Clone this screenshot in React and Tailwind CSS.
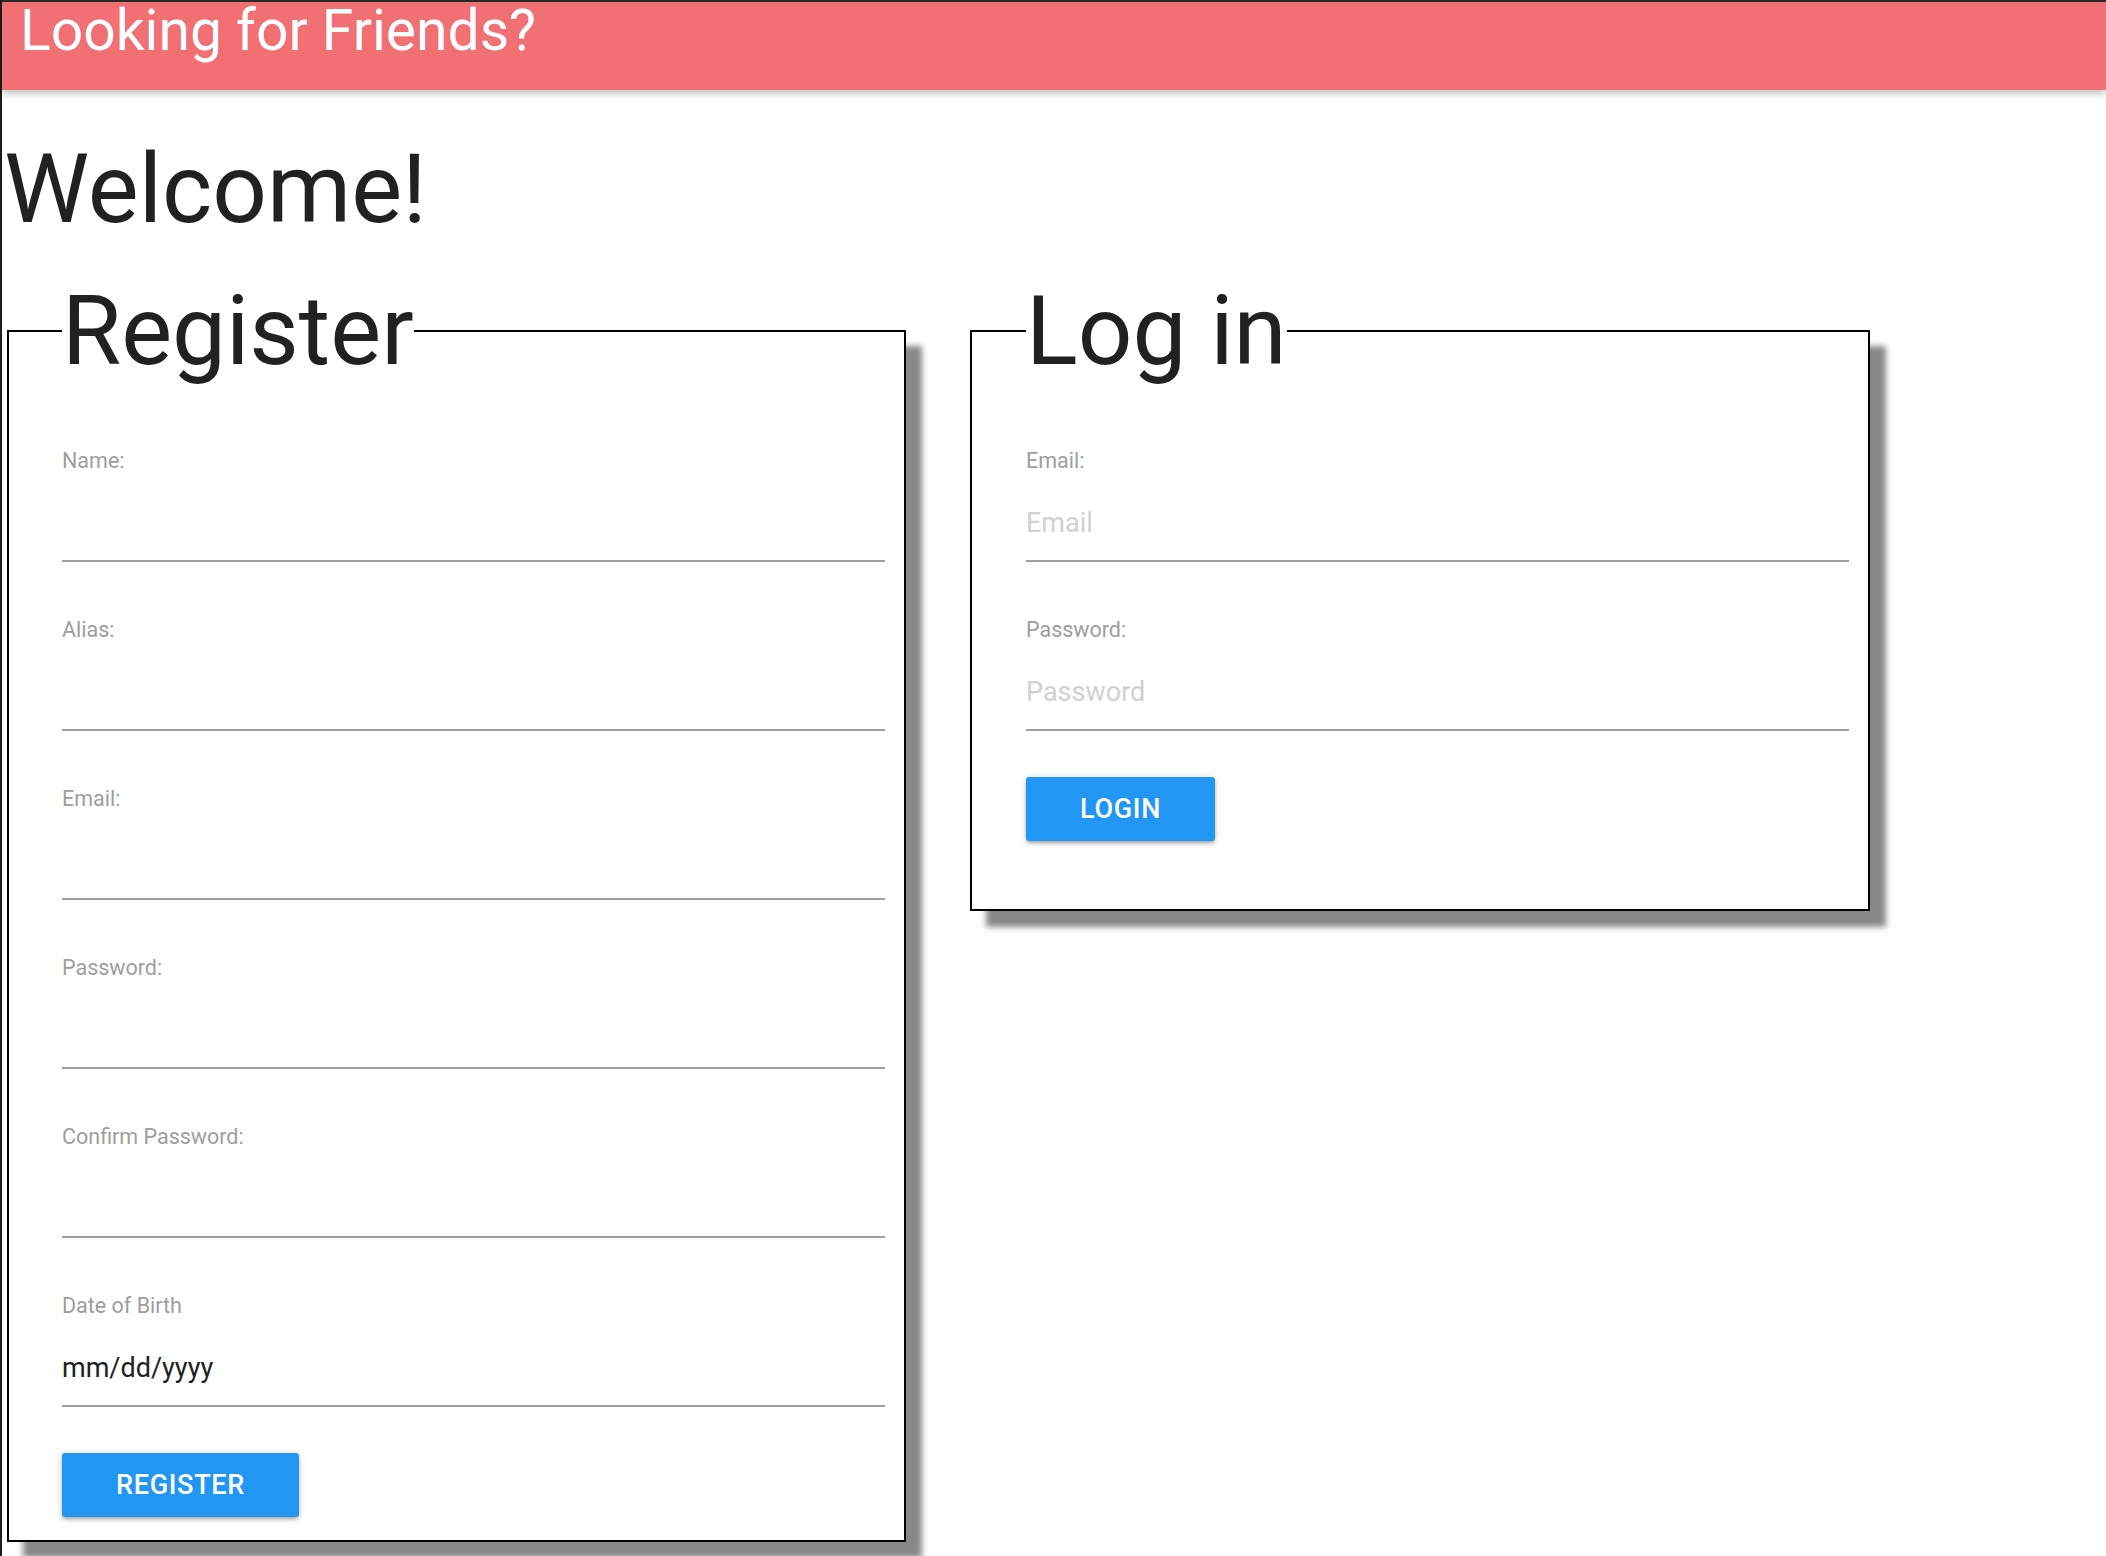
import React from "react";

function Field({ label, placeholder, type = "text", first = false, dark = false }) {
  return (
    <div className={first ? "mt-[62px]" : "mt-[56px]"}>
      <label className="block text-[21.5px] leading-[24px] text-[#9e9e9e]">{label}</label>
      <input
        type={type}
        placeholder={placeholder}
        className={
          "mt-[13px] block h-[76px] w-full border-b-2 border-[#9e9e9e] bg-transparent text-[27px] text-[#212121] outline-none " +
          (dark ? "placeholder:text-[#212121]" : "placeholder:text-[#d1d1d1]")
        }
      />
    </div>
  );
}

function Button({ children }) {
  return (
    <button
      type="button"
      className="mt-[46px] flex h-[64px] items-center justify-center rounded-[3px] bg-[#2196f3] px-[54px] text-[27px] font-medium leading-none tracking-[0.7px] text-white shadow-[0_3px_3px_0_rgba(0,0,0,0.14),0_4px_2px_-3px_rgba(0,0,0,0.12),0_1px_7px_0_rgba(0,0,0,0.2)]"
    >
      {children}
    </button>
  );
}

export default function App() {
  return (
    <div className="min-h-screen w-full border-l-2 border-[#1c1c1c] bg-white font-['Roboto',sans-serif]">
      <header className="h-[90px] border-t-2 border-[#2a2a2a] bg-[#f07074] pl-[18px] shadow-[0_3px_8px_rgba(0,0,0,0.28)]">
        <div className="text-[57px] leading-[57px] text-white">Looking for Friends?</div>
      </header>

      <h1 className="ml-[2px] mt-[43px] text-[96px] font-normal leading-[112px] text-[#212121]">Welcome!</h1>

      <div className="mt-[30px] flex items-start gap-[64px] pl-[5px]">
        <fieldset className="w-[899px] border-2 border-black pb-[23px] pl-[53px] pr-[19px] shadow-[16px_16px_6px_#888888]">
          <legend className="p-0 text-[96px] leading-[112px] text-[#212121]">Register</legend>
          <Field label="Name:" first />
          <Field label="Alias:" />
          <Field label="Email:" type="email" />
          <Field label="Password:" type="password" />
          <Field label="Confirm Password:" type="password" />
          <Field label="Date of Birth" placeholder="mm/dd/yyyy" dark />
          <Button>REGISTER</Button>
        </fieldset>

        <fieldset className="w-[900px] border-2 border-black pb-[68px] pl-[54px] pr-[19px] shadow-[16px_16px_6px_#888888]">
          <legend className="p-0 text-[96px] leading-[112px] text-[#212121]">Log in</legend>
          <Field label="Email:" placeholder="Email" type="email" first />
          <Field label="Password:" placeholder="Password" type="password" />
          <Button>LOGIN</Button>
        </fieldset>
      </div>
    </div>
  );
}
